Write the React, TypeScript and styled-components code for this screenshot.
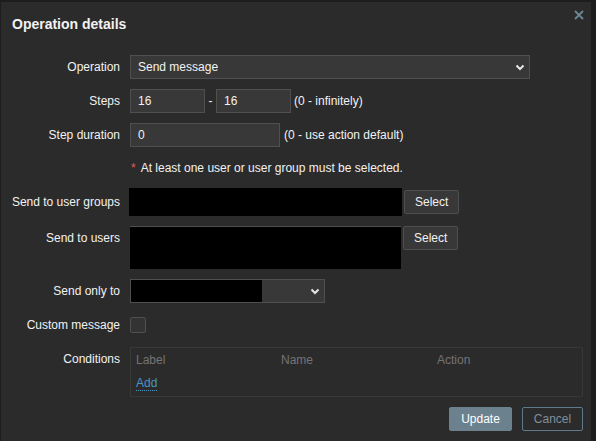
import styled, { createGlobalStyle } from "styled-components";

const GlobalStyle = createGlobalStyle`
  html, body {
    margin: 0;
    padding: 0;
    background-color: #1d1d1d;
    font-family: "Liberation Sans", Arial, sans-serif;
    font-size: 12px;
    color: #f2f2f2;
  }
  #root {
    height: 441px;
    overflow: hidden;
  }
`;

const Dialog = styled.div`
  margin: 2px 0 0 1px;
  width: 590px;
  height: 460px;
  background-color: #2b2b2b;
  box-sizing: border-box;
`;

const Header = styled.div`
  height: 44px;
  display: flex;
  align-items: center;
  justify-content: space-between;
  padding: 0 3px 0 11px;
`;

const Title = styled.h4`
  margin: 0;
  font-size: 14px;
  font-weight: bold;
  color: #f2f2f2;
`;

const CloseButton = styled.button`
  width: 18px;
  height: 18px;
  margin-top: -18px;
  padding: 0;
  border: none;
  background: transparent;
  display: flex;
  align-items: center;
  justify-content: center;
  cursor: pointer;
`;

const Body = styled.div`
  padding: 9px 8px 0 0;
`;

const Form = styled.div`
  display: grid;
  grid-template-columns: 119px 1fr;
  column-gap: 10px;
  row-gap: 10px;
`;

const Label = styled.label<{ $center?: boolean }>`
  text-align: right;
  line-height: 24px;
  align-self: ${(props) => (props.$center ? "center" : "start")};
  white-space: nowrap;
  color: #f2f2f2;
`;

const Control = styled.div<{ $h: number }>`
  height: ${(props) => props.$h}px;
  display: flex;
  align-items: center;
  min-width: 0;
`;

const Input = styled.input<{ $w: number }>`
  box-sizing: border-box;
  width: ${(props) => props.$w}px;
  height: 24px;
  padding: 0 7px;
  background-color: #383838;
  border: 1px solid #4f4f4f;
  color: #f2f2f2;
  font-family: inherit;
  font-size: 12px;
  outline: none;
`;

const SelectBox = styled.div<{ $w: number }>`
  box-sizing: border-box;
  width: ${(props) => props.$w}px;
  height: 24px;
  padding: 0 4px 0 7px;
  background-color: #383838;
  border: 1px solid #4f4f4f;
  display: flex;
  align-items: center;
  justify-content: space-between;
  position: relative;
`;

const Redacted = styled.div`
  position: absolute;
  left: 0;
  top: 0;
  bottom: 0;
  width: 131px;
  background-color: #000;
`;

const Hint = styled.span<{ $gap: number }>`
  margin-left: ${(props) => props.$gap}px;
  white-space: nowrap;
`;

const Dash = styled.span`
  width: 11px;
  text-align: center;
`;

const Asterisk = styled.span`
  color: #e45959;
  margin: 0 5px 0 1px;
`;

const MultiSelect = styled.div<{ $w: number; $h: number; $line?: boolean }>`
  box-sizing: border-box;
  width: ${(props) => props.$w}px;
  height: ${(props) => props.$h}px;
  background-color: #000;
  border-top: ${(props) => (props.$line ? "1px solid #4f4f4f" : "none")};
  margin-left: ${(props) => (props.$line ? 0 : -1)}px;
`;

const TopRow = styled.div`
  display: flex;
  align-items: flex-start;
  height: 100%;
`;

const Button = styled.button`
  box-sizing: border-box;
  height: 24px;
  padding: 0 10px;
  margin-left: 2px;
  background-color: #383838;
  border: 1px solid #4f4f4f;
  border-radius: 2px;
  color: #f2f2f2;
  font-family: inherit;
  font-size: 12px;
`;

const Checkbox = styled.span`
  box-sizing: border-box;
  width: 16px;
  height: 16px;
  background-color: #333333;
  border: 1px solid #4f4f4f;
  border-radius: 2px;
`;

const Table = styled.div`
  box-sizing: border-box;
  width: 100%;
  height: 50px;
  border: 1px solid #383838;
  padding: 3px 5px 0;
`;

const HeadRow = styled.div`
  display: grid;
  grid-template-columns: 145px 156px 1fr;
  line-height: 18px;
  color: #747474;
`;

const AddLink = styled.a`
  display: inline-block;
  margin-top: 7px;
  line-height: 14px;
  color: #4796c4;
  text-decoration: none;
  border-bottom: 1px dotted #4796c4;
`;

const Footer = styled.div`
  display: flex;
  justify-content: flex-end;
  gap: 10px;
  padding-top: 10px;
`;

const PrimaryButton = styled.button`
  box-sizing: border-box;
  height: 24px;
  width: 63px;
  background-color: #6b828e;
  border: 1px solid #6b828e;
  border-radius: 2px;
  color: #ffffff;
  font-family: inherit;
  font-size: 12px;
`;

const OutlineButton = styled.button`
  box-sizing: border-box;
  height: 24px;
  width: 61px;
  background-color: transparent;
  border: 1px solid #5f7a88;
  border-radius: 2px;
  color: #7f909a;
  font-family: inherit;
  font-size: 12px;
`;

function Chevron() {
  return (
    <svg width="10" height="7" viewBox="0 0 10 7">
      <polyline
        points="1.5,1.5 5,5 8.5,1.5"
        fill="none"
        stroke="#e6e6e6"
        strokeWidth="2"
      />
    </svg>
  );
}

function CloseIcon() {
  return (
    <svg width="10" height="10" viewBox="0 0 10 10">
      <path d="M1 1 L9 9 M9 1 L1 9" stroke="#6c8896" strokeWidth="1.8" />
    </svg>
  );
}

export default function App() {
  return (
    <>
      <GlobalStyle />
      <Dialog>
        <Header>
          <Title>Operation details</Title>
          <CloseButton>
            <CloseIcon />
          </CloseButton>
        </Header>
        <Body>
          <Form>
            <Label>Operation</Label>
            <Control $h={24}>
              <SelectBox $w={400}>
                <span>Send message</span>
                <Chevron />
              </SelectBox>
            </Control>

            <Label>Steps</Label>
            <Control $h={24}>
              <Input $w={75} defaultValue="16" />
              <Dash>-</Dash>
              <Input $w={75} defaultValue="16" />
              <Hint $gap={3}>(0 - infinitely)</Hint>
            </Control>

            <Label>Step duration</Label>
            <Control $h={24}>
              <Input $w={150} defaultValue="0" />
              <Hint $gap={4}>(0 - use action default)</Hint>
            </Control>

            <Label />
            <Control $h={21}>
              <Asterisk>*</Asterisk>
              <span>At least one user or user group must be selected.</span>
            </Control>

            <Label $center>Send to user groups</Label>
            <Control $h={28}>
              <MultiSelect $w={273} $h={28} />
              <Button>Select</Button>
            </Control>

            <Label>Send to users</Label>
            <Control $h={43}>
              <TopRow>
                <MultiSelect $w={271} $h={43} $line />
                <Button>Select</Button>
              </TopRow>
            </Control>

            <Label>Send only to</Label>
            <Control $h={24}>
              <SelectBox $w={195}>
                <Redacted />
                <span />
                <Chevron />
              </SelectBox>
            </Control>

            <Label>Custom message</Label>
            <Control $h={24}>
              <Checkbox />
            </Control>

            <Label>Conditions</Label>
            <Control $h={50}>
              <Table>
                <HeadRow>
                  <span>Label</span>
                  <span>Name</span>
                  <span>Action</span>
                </HeadRow>
                <AddLink>Add</AddLink>
              </Table>
            </Control>
          </Form>
          <Footer>
            <PrimaryButton>Update</PrimaryButton>
            <OutlineButton>Cancel</OutlineButton>
          </Footer>
        </Body>
      </Dialog>
    </>
  );
}
